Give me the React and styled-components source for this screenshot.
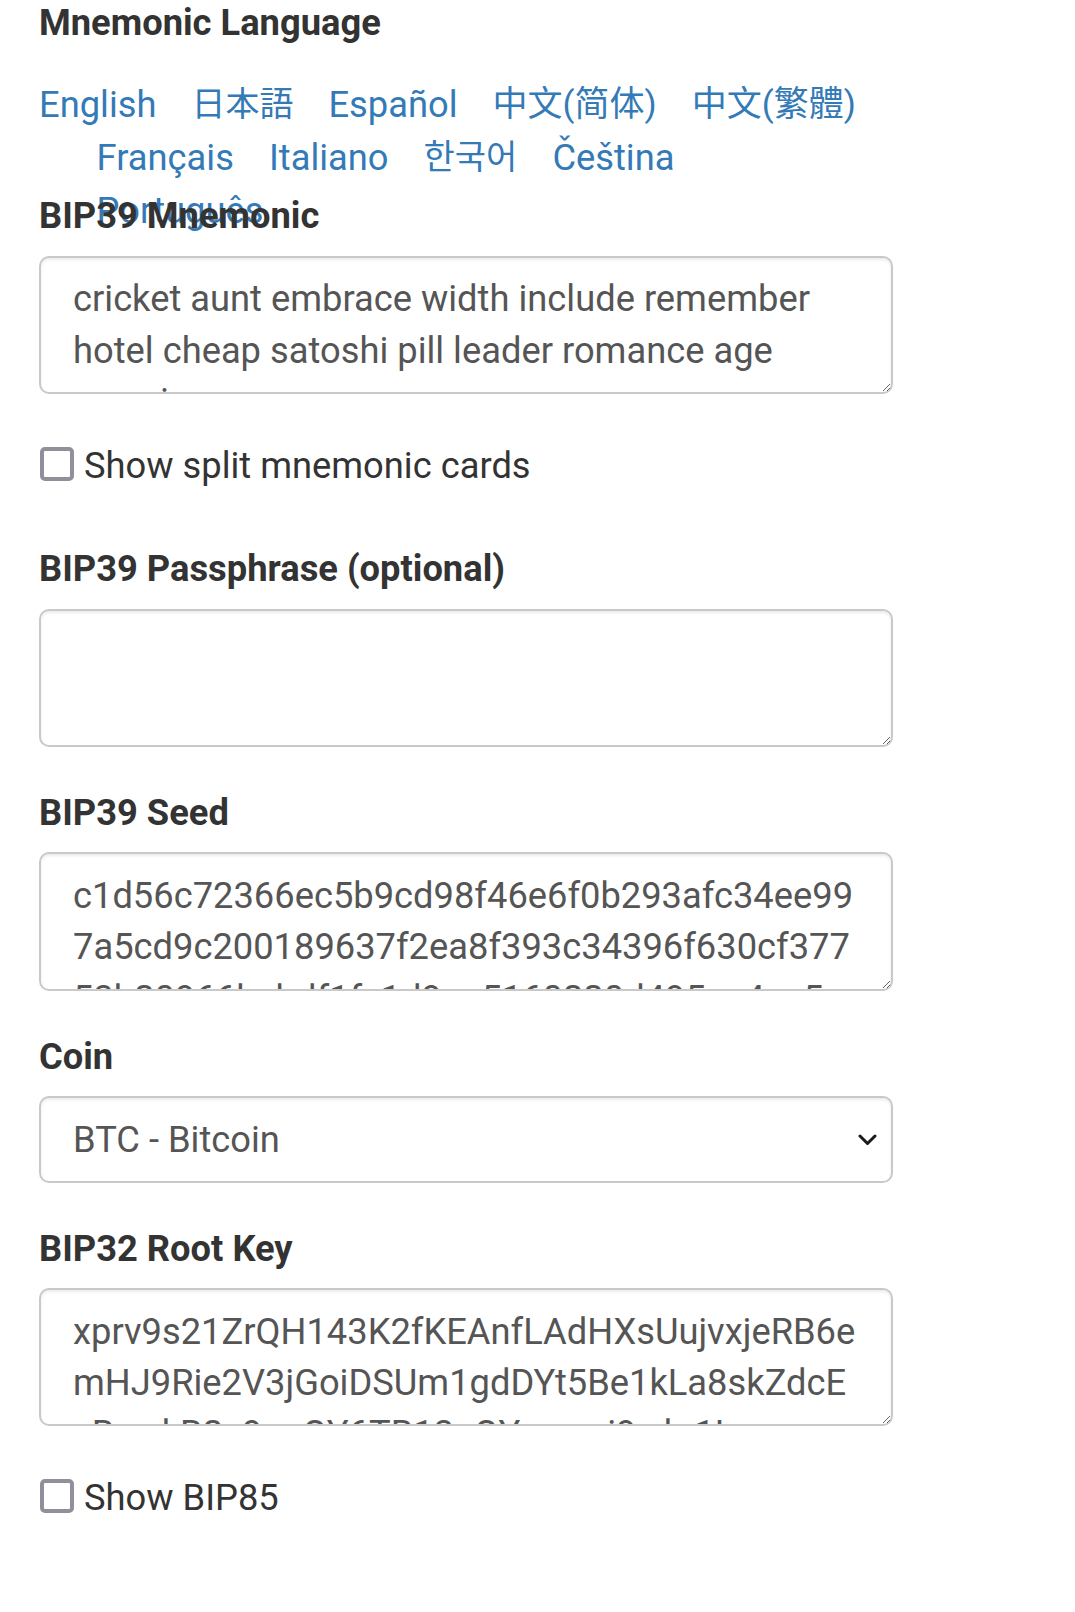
import React from 'react';
import styled, { createGlobalStyle } from 'styled-components';

const GlobalStyle = createGlobalStyle`
  html, body { margin: 0; padding: 0; background: #fff; }
  body {
    font-family: Roboto, "Noto Sans", "Noto Sans CJK SC", sans-serif;
    color: #333;
    -webkit-font-smoothing: antialiased;
  }
`;

const Page = styled.main`
  width: 854px;
  padding: 0 39px 120px;
`;

const Group = styled.div`
  margin-bottom: ${(p) => (p.$mb ?? 40)}px;
`;

const Label = styled.label`
  display: block;
  font-size: 36.3px;
  font-weight: 700;
  line-height: 51.4px;
  color: #333;
  margin: ${(p) => p.$mt || 0}px 0 ${(p) => (p.$mb ?? 14)}px;
`;

const Languages = styled.div`
  display: flex;
  flex-wrap: wrap;
  column-gap: 35px;
  width: 824px;
  box-sizing: border-box;
  padding-left: 57.6px;
  height: 112px;
  margin-top: 29.8px;
  font-size: 36.3px;
  line-height: 53px;
`;

const LangLink = styled.a`
  color: #337ab7;
  text-decoration: none;
  white-space: nowrap;
  font-family: Roboto, ${(p) => p.$cjk || '"Noto Sans CJK SC"'}, sans-serif;
  font-size: ${(p) => p.$fs || 'inherit'};
  &:first-child {
    margin-left: -57.6px;
  }
`;

const TextArea = styled.textarea`
  display: block;
  width: 100%;
  box-sizing: border-box;
  height: 138.4px;
  margin: 0;
  padding: 15.6px 32px;
  border: 2px solid #c9c9c9;
  border-radius: 10px;
  box-shadow: inset 0 2px 3px rgba(0, 0, 0, 0.08);
  font-family: Roboto, sans-serif;
  font-size: 36.3px;
  line-height: 51.4px;
  color: #555;
  background: #fff;
  resize: vertical;
  overflow: hidden;
  outline: none;
`;

const SelectWrap = styled.div`
  position: relative;
`;

const Select = styled.select`
  display: block;
  width: 100%;
  height: 86.4px;
  box-sizing: border-box;
  margin: 0;
  padding: 0 32px;
  border: 2px solid #c9c9c9;
  border-radius: 10px;
  box-shadow: inset 0 2px 3px rgba(0, 0, 0, 0.08);
  font-family: Roboto, sans-serif;
  font-size: 36.3px;
  color: #555;
  background: #fff;
  appearance: none;
  -webkit-appearance: none;
  outline: none;
`;

const Chevron = styled.svg`
  position: absolute;
  right: 16px;
  top: 50%;
  width: 19px;
  height: 12px;
  margin-top: -5px;
  pointer-events: none;
`;

const CheckRow = styled.label`
  display: flex;
  align-items: center;
  gap: 10px;
  height: 51.4px;
  margin: ${(p) => p.$mt || 0}px 0 ${(p) => p.$mb || 0}px;
  font-size: 36.3px;
  color: #333;
`;

const Box = styled.input.attrs({ type: 'checkbox' })`
  appearance: none;
  -webkit-appearance: none;
  width: 34px;
  height: 34px;
  margin: -3px 0 0 1px;
  box-sizing: border-box;
  border: 4px solid #918f9c;
  border-radius: 5px;
  background: #fff;
  flex: none;
`;

const languages = [
  { t: 'English' },
  { t: '日本語', cjk: '"Noto Sans CJK JP"', fs: '34px' },
  { t: 'Español' },
  { t: '中文(简体)', cjk: '"Noto Sans CJK SC"', fs: '35px' },
  { t: '中文(繁體)', cjk: '"Noto Sans CJK TC"', fs: '35px' },
  { t: 'Français' },
  { t: 'Italiano' },
  { t: '한국어', cjk: '"Noto Sans CJK KR"', fs: '34px' },
  { t: 'Čeština' },
  { t: 'Português' },
];

const mnemonic =
  'cricket aunt embrace width include remember hotel cheap satoshi pill leader romance age exercise ocean';
const seed =
  'c1d56c72366ec5b9cd98f46e6f0b293afc34ee997a5cd9c200189637f2ea8f393c34396f630cf37753b20966bcbdf1fc1d9aa5160220d495ca4ce5a08e3d41f7';
const rootKey =
  'xprv9s21ZrQH143K2fKEAnfLAdHXsUujvxjeRB6emHJ9Rie2V3jGoiDSUm1gdDYt5Be1kLa8skZdcEsBnwkB2c9oeQY6TB13uQYmxnxj9wkr1Lp';

export default function App() {
  return (
    <>
      <GlobalStyle />
      <Page>
        <Label $mt={-3} $mb={0}>Mnemonic Language</Label>
        <Languages>
          {languages.map((l) => (
            <LangLink key={l.t} href="#" $cjk={l.cjk} $fs={l.fs}>
              {l.t}
            </LangLink>
          ))}
        </Languages>

        <Group $mb={0}>
          <Label>BIP39 Mnemonic</Label>
          <TextArea readOnly value={mnemonic} />
        </Group>

        <CheckRow $mt={46.3} $mb={51.5}>
          <Box />
          Show split mnemonic cards
        </CheckRow>

        <Group>
          <Label>BIP39 Passphrase (optional)</Label>
          <TextArea readOnly value="" />
        </Group>

        <Group>
          <Label>BIP39 Seed</Label>
          <TextArea readOnly value={seed} />
        </Group>

        <Group>
          <Label>Coin</Label>
          <SelectWrap>
            <Select defaultValue="btc">
              <option value="btc">BTC - Bitcoin</option>
            </Select>
            <Chevron viewBox="0 0 19 12">
              <polyline points="2,2 9.5,9.5 17,2" fill="none" stroke="#1a1a1a" strokeWidth="3" strokeLinecap="round" strokeLinejoin="round" />
            </Chevron>
          </SelectWrap>
        </Group>

        <Group $mb={45.2}>
          <Label>BIP32 Root Key</Label>
          <TextArea readOnly value={rootKey} />
        </Group>

        <CheckRow>
          <Box />
          Show BIP85
        </CheckRow>
      </Page>
    </>
  );
}
